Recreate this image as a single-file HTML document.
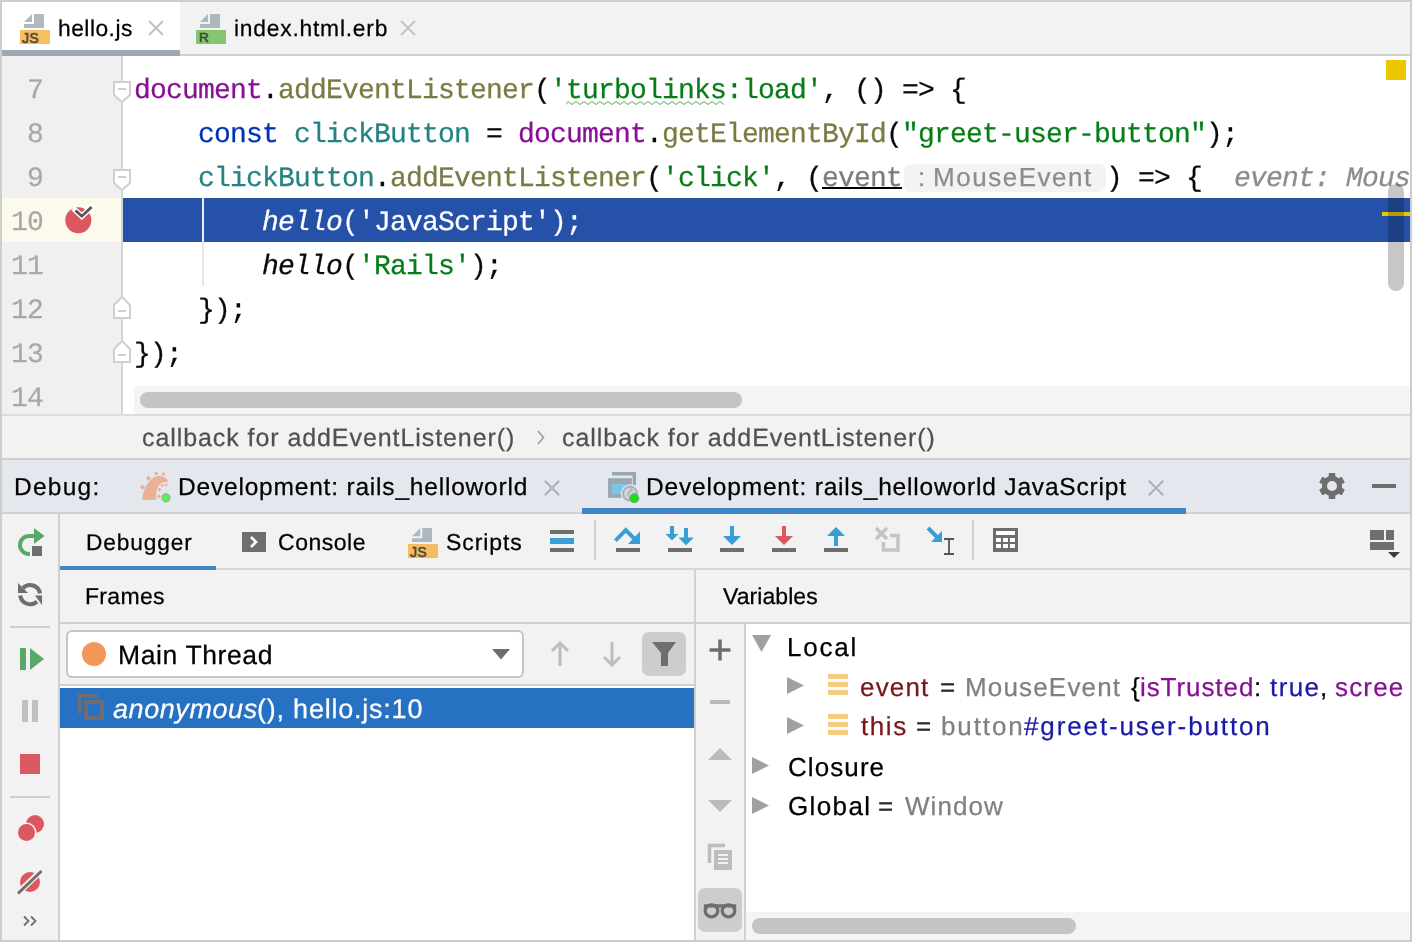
<!DOCTYPE html>
<html><head><meta charset="utf-8"><style>
html,body{margin:0;padding:0;}
body{width:1412px;height:942px;position:relative;overflow:hidden;background:#cdcdcd;font-family:"Liberation Sans", sans-serif;}
.r{position:absolute;display:block;}
.t{position:absolute;white-space:pre;line-height:normal;will-change:transform;text-rendering:geometricPrecision;-webkit-text-stroke:0.25px currentColor;}
</style></head><body>
<div class="r" style="left:2px;top:2px;width:1408px;height:52px;background:#f2f2f2;"></div>
<div class="r" style="left:2px;top:2px;width:178px;height:48px;background:#ffffff;"></div>
<div class="r" style="left:180px;top:54px;width:1230px;height:2px;background:#d1d1d1;"></div>
<div class="r" style="left:2px;top:50px;width:178px;height:6px;background:#9ca7b8;"></div>
<svg class="r" style="left:20px;top:14px" width="30" height="30" viewBox="0 0 30 30"><path d="M14 0H24V14H4V10H14Z" fill="#9aa7b0" opacity=".8"/><path d="M4 8L12 0V8Z" fill="#9aa7b0" opacity=".8"/><rect x="0" y="16" width="30" height="14" fill="#f4af3d" opacity=".8"/><text x="2" y="28.6" font-family="Liberation Sans" font-size="14" stroke="#231f20" stroke-width=".6" fill="#231f20" opacity=".75" letter-spacing=".2">JS</text></svg>
<div class="t" style="left:58.42px;top:15.37px;font-size:22.8px;letter-spacing:0.490px;color:#000;font-family:'Liberation Sans', sans-serif;font-style:normal;">hello.js</div>
<svg class="r" style="left:147px;top:19px" width="18" height="18" viewBox="0 0 18 18"><path d="M2 2L16 16M16 2L2 16" stroke="#bec3c6" stroke-width="2"/></svg>
<svg class="r" style="left:196px;top:14px" width="30" height="30" viewBox="0 0 30 30"><path d="M14 0H24V14H4V10H14Z" fill="#9aa7b0" opacity=".8"/><path d="M4 8L12 0V8Z" fill="#9aa7b0" opacity=".8"/><rect x="0" y="16" width="30" height="14" fill="#62b543" opacity=".75"/><text x="3" y="28" font-family="Liberation Sans" font-size="13.5" stroke="#231f20" stroke-width=".6" fill="#231f20" opacity=".75">R</text></svg>
<div class="t" style="left:233.97px;top:15.37px;font-size:22.8px;letter-spacing:0.783px;color:#000;font-family:'Liberation Sans', sans-serif;font-style:normal;">index.html.erb</div>
<svg class="r" style="left:399px;top:19px" width="18" height="18" viewBox="0 0 18 18"><path d="M2 2L16 16M16 2L2 16" stroke="#bec3c6" stroke-width="2"/></svg>
<div class="r" style="left:2px;top:56px;width:119px;height:358px;background:#f0f0f0;"></div>
<div class="r" style="left:121px;top:56px;width:2px;height:358px;background:#d5d5d5;"></div>
<div class="r" style="left:123px;top:56px;width:1287px;height:358px;background:#ffffff;"></div>
<div class="r" style="left:2px;top:198px;width:119px;height:44px;background:#fcfaed;"></div>
<div class="r" style="left:123px;top:198px;width:1287px;height:44px;background:#2551a8;"></div>
<div class="r" style="left:202px;top:242px;width:2px;height:44px;background:#e6e6e6;"></div>
<div class="r" style="left:202px;top:198px;width:2px;height:44px;background:#ffffff;opacity:.9"></div>
<div class="t" style="left:134px;top:76.19px;font-size:28px;letter-spacing:-0.8px;color:#871094;font-family:'Liberation Mono', monospace;font-style:normal;">document</div>
<div class="t" style="left:262px;top:76.19px;font-size:28px;letter-spacing:-0.8px;color:#080808;font-family:'Liberation Mono', monospace;font-style:normal;">.</div>
<div class="t" style="left:278px;top:76.19px;font-size:28px;letter-spacing:-0.8px;color:#7a7a43;font-family:'Liberation Mono', monospace;font-style:normal;">addEventListener</div>
<div class="t" style="left:534px;top:76.19px;font-size:28px;letter-spacing:-0.8px;color:#080808;font-family:'Liberation Mono', monospace;font-style:normal;">(</div>
<div class="t" style="left:550px;top:76.19px;font-size:28px;letter-spacing:-0.8px;color:#067d17;font-family:'Liberation Mono', monospace;font-style:normal;">'turbolinks:load'</div>
<div class="t" style="left:822px;top:76.19px;font-size:28px;letter-spacing:-0.8px;color:#080808;font-family:'Liberation Mono', monospace;font-style:normal;">, () =&gt; {</div>
<div class="t" style="left:198px;top:120.19px;font-size:28px;letter-spacing:-0.8px;color:#0033b3;font-family:'Liberation Mono', monospace;font-style:normal;">const</div>
<div class="t" style="left:278px;top:120.19px;font-size:28px;letter-spacing:-0.8px;color:#080808;font-family:'Liberation Mono', monospace;font-style:normal;"> </div>
<div class="t" style="left:294px;top:120.19px;font-size:28px;letter-spacing:-0.8px;color:#248282;font-family:'Liberation Mono', monospace;font-style:normal;">clickButton</div>
<div class="t" style="left:470px;top:120.19px;font-size:28px;letter-spacing:-0.8px;color:#080808;font-family:'Liberation Mono', monospace;font-style:normal;"> = </div>
<div class="t" style="left:518px;top:120.19px;font-size:28px;letter-spacing:-0.8px;color:#871094;font-family:'Liberation Mono', monospace;font-style:normal;">document</div>
<div class="t" style="left:646px;top:120.19px;font-size:28px;letter-spacing:-0.8px;color:#080808;font-family:'Liberation Mono', monospace;font-style:normal;">.</div>
<div class="t" style="left:662px;top:120.19px;font-size:28px;letter-spacing:-0.8px;color:#7a7a43;font-family:'Liberation Mono', monospace;font-style:normal;">getElementById</div>
<div class="t" style="left:886px;top:120.19px;font-size:28px;letter-spacing:-0.8px;color:#080808;font-family:'Liberation Mono', monospace;font-style:normal;">(</div>
<div class="t" style="left:902px;top:120.19px;font-size:28px;letter-spacing:-0.8px;color:#067d17;font-family:'Liberation Mono', monospace;font-style:normal;">"greet-user-button"</div>
<div class="t" style="left:1206px;top:120.19px;font-size:28px;letter-spacing:-0.8px;color:#080808;font-family:'Liberation Mono', monospace;font-style:normal;">);</div>
<div class="t" style="left:198px;top:164.19px;font-size:28px;letter-spacing:-0.8px;color:#248282;font-family:'Liberation Mono', monospace;font-style:normal;">clickButton</div>
<div class="t" style="left:374px;top:164.19px;font-size:28px;letter-spacing:-0.8px;color:#080808;font-family:'Liberation Mono', monospace;font-style:normal;">.</div>
<div class="t" style="left:390px;top:164.19px;font-size:28px;letter-spacing:-0.8px;color:#7a7a43;font-family:'Liberation Mono', monospace;font-style:normal;">addEventListener</div>
<div class="t" style="left:646px;top:164.19px;font-size:28px;letter-spacing:-0.8px;color:#080808;font-family:'Liberation Mono', monospace;font-style:normal;">(</div>
<div class="t" style="left:662px;top:164.19px;font-size:28px;letter-spacing:-0.8px;color:#067d17;font-family:'Liberation Mono', monospace;font-style:normal;">'click'</div>
<div class="t" style="left:774px;top:164.19px;font-size:28px;letter-spacing:-0.8px;color:#080808;font-family:'Liberation Mono', monospace;font-style:normal;">, (</div>
<div class="t" style="left:822px;top:164.19px;font-size:28px;letter-spacing:-0.8px;color:#7b7b7b;font-family:'Liberation Mono', monospace;font-style:normal;">event</div>
<div class="r" style="left:822px;top:187px;width:80px;height:2px;background:#000;"></div>
<svg class="r" style="left:566px;top:100px" width="160" height="6" viewBox="0 0 160 6"><path d="M0 4.5 L2 1.5 L6 4.5 L10 1.5 L14 4.5 L18 1.5 L22 4.5 L26 1.5 L30 4.5 L34 1.5 L38 4.5 L42 1.5 L46 4.5 L50 1.5 L54 4.5 L58 1.5 L62 4.5 L66 1.5 L70 4.5 L74 1.5 L78 4.5 L82 1.5 L86 4.5 L90 1.5 L94 4.5 L98 1.5 L102 4.5 L106 1.5 L110 4.5 L114 1.5 L118 4.5 L122 1.5 L126 4.5 L130 1.5 L134 4.5 L138 1.5 L142 4.5 L146 1.5 L150 4.5 L154 1.5 L158 4.5" stroke="#8fc68f" stroke-width="1.2" fill="none"/></svg>
<div class="r" style="left:904px;top:164px;width:202px;height:28px;background:#f3f3f3;border-radius:7px"></div>
<div class="t" style="left:918.23px;top:161.87px;font-size:26px;letter-spacing:0.000px;color:#8c8c8c;font-family:'Liberation Sans', sans-serif;font-style:normal;">:</div>
<div class="t" style="left:932.87px;top:161.87px;font-size:26px;letter-spacing:1.533px;color:#8c8c8c;font-family:'Liberation Sans', sans-serif;font-style:normal;">MouseEvent</div>
<div class="t" style="left:134px;top:164.19px;font-size:28px;letter-spacing:-0.8px;color:#080808;font-family:'Liberation Mono', monospace;font-style:normal;"></div>
<div class="t" style="left:1106px;top:164.19px;font-size:28px;letter-spacing:-0.8px;color:#080808;font-family:'Liberation Mono', monospace">) =&gt; {</div>
<div class="t" style="left:1234px;top:164.19px;font-size:28px;letter-spacing:-0.8px;color:#8c8c8c;font-family:'Liberation Mono', monospace;font-style:italic">event: Mous</div>
<div class="t" style="left:262px;top:208.19px;font-size:28px;letter-spacing:-0.8px;color:#ffffff;font-family:'Liberation Mono', monospace;font-style:italic;">hello</div>
<div class="t" style="left:342px;top:208.19px;font-size:28px;letter-spacing:-0.8px;color:#ffffff;font-family:'Liberation Mono', monospace;font-style:normal;">('JavaScript');</div>
<div class="t" style="left:262px;top:252.19px;font-size:28px;letter-spacing:-0.8px;color:#080808;font-family:'Liberation Mono', monospace;font-style:italic;">hello</div>
<div class="t" style="left:342px;top:252.19px;font-size:28px;letter-spacing:-0.8px;color:#080808;font-family:'Liberation Mono', monospace;font-style:normal;">(</div>
<div class="t" style="left:358px;top:252.19px;font-size:28px;letter-spacing:-0.8px;color:#067d17;font-family:'Liberation Mono', monospace;font-style:normal;">'Rails'</div>
<div class="t" style="left:470px;top:252.19px;font-size:28px;letter-spacing:-0.8px;color:#080808;font-family:'Liberation Mono', monospace;font-style:normal;">);</div>
<div class="t" style="left:198px;top:296.19px;font-size:28px;letter-spacing:-0.8px;color:#080808;font-family:'Liberation Mono', monospace;font-style:normal;">});</div>
<div class="t" style="left:134px;top:340.19px;font-size:28px;letter-spacing:-0.8px;color:#080808;font-family:'Liberation Mono', monospace;font-style:normal;">});</div>
<div class="t" style="left:27px;top:76.19px;font-size:28px;letter-spacing:-0.8px;color:#a8a8a8;font-family:'Liberation Mono', monospace">7</div>
<div class="t" style="left:27px;top:120.19px;font-size:28px;letter-spacing:-0.8px;color:#a8a8a8;font-family:'Liberation Mono', monospace">8</div>
<div class="t" style="left:27px;top:164.19px;font-size:28px;letter-spacing:-0.8px;color:#a8a8a8;font-family:'Liberation Mono', monospace">9</div>
<div class="t" style="left:11px;top:208.19px;font-size:28px;letter-spacing:-0.8px;color:#a8a8a8;font-family:'Liberation Mono', monospace">10</div>
<div class="t" style="left:11px;top:252.19px;font-size:28px;letter-spacing:-0.8px;color:#a8a8a8;font-family:'Liberation Mono', monospace">11</div>
<div class="t" style="left:11px;top:296.19px;font-size:28px;letter-spacing:-0.8px;color:#a8a8a8;font-family:'Liberation Mono', monospace">12</div>
<div class="t" style="left:11px;top:340.19px;font-size:28px;letter-spacing:-0.8px;color:#a8a8a8;font-family:'Liberation Mono', monospace">13</div>
<div class="t" style="left:11px;top:384.19px;font-size:28px;letter-spacing:-0.8px;color:#a8a8a8;font-family:'Liberation Mono', monospace">14</div>
<svg class="r" style="left:113px;top:81px" width="18" height="22" viewBox="0 0 18 22"><path d="M1 1H17V14L9 21L1 14Z" fill="#ffffff" stroke="#cfcfcf" stroke-width="2"/><path d="M5 8H13" stroke="#cfcfcf" stroke-width="2"/></svg>
<svg class="r" style="left:113px;top:169px" width="18" height="22" viewBox="0 0 18 22"><path d="M1 1H17V14L9 21L1 14Z" fill="#ffffff" stroke="#cfcfcf" stroke-width="2"/><path d="M5 8H13" stroke="#cfcfcf" stroke-width="2"/></svg>
<svg class="r" style="left:113px;top:295.6px" width="18" height="24" viewBox="0 0 18 24"><path d="M1 22H17V9L9 1L1 9Z" fill="#ffffff" stroke="#cfcfcf" stroke-width="2"/><path d="M5 15H13" stroke="#cfcfcf" stroke-width="2"/></svg>
<svg class="r" style="left:113px;top:339.9px" width="18" height="24" viewBox="0 0 18 24"><path d="M1 22H17V9L9 1L1 9Z" fill="#ffffff" stroke="#cfcfcf" stroke-width="2"/><path d="M5 15H13" stroke="#cfcfcf" stroke-width="2"/></svg>
<svg class="r" style="left:62px;top:202px" width="36" height="34" viewBox="0 0 36 34"><circle cx="16.3" cy="18.2" r="13" fill="#db5860"/><path d="M13.2 8.2L19.8 14.3L30 4.6" stroke="#ffffff" stroke-width="5.5" fill="none" stroke-linecap="square"/><path d="M13.6 8.4L19.8 14.2L29.6 4.9" stroke="#555555" stroke-width="2.8" fill="none"/></svg>
<div class="r" style="left:1386px;top:60px;width:20px;height:20px;background:#ebc700;"></div>
<div class="r" style="left:1382px;top:212px;width:28px;height:4px;background:#ebc700;"></div>
<div class="r" style="left:1388px;top:184px;width:16px;height:107px;background:rgba(0,0,0,0.22);border-radius:8px"></div>
<div class="r" style="left:134px;top:386px;width:1276px;height:28px;background:#f4f4f4;"></div>
<div class="r" style="left:140px;top:392px;width:602px;height:16px;background:#c4c4c4;border-radius:8px"></div>
<div class="r" style="left:2px;top:414px;width:1408px;height:2px;background:#dcdcdc;"></div>
<div class="r" style="left:2px;top:416px;width:1408px;height:42px;background:#f2f2f2;"></div>
<div class="r" style="left:2px;top:458px;width:1408px;height:2px;background:#cfcfcf;"></div>
<div class="t" style="left:141.64px;top:424.38px;font-size:25px;letter-spacing:0.923px;color:#505050;font-family:'Liberation Sans', sans-serif;font-style:normal;">callback for addEventListener()</div>
<svg class="r" style="left:537px;top:430px" width="8" height="15" viewBox="0 0 8 15"><path d="M1 1L6.5 7.5L1 14" stroke="#a0a0a0" stroke-width="1.8" fill="none"/></svg>
<div class="t" style="left:561.64px;top:424.38px;font-size:25px;letter-spacing:0.943px;color:#505050;font-family:'Liberation Sans', sans-serif;font-style:normal;">callback for addEventListener()</div>
<div class="r" style="left:2px;top:460px;width:1408px;height:52px;background:#e4e7ee;"></div>
<div class="r" style="left:2px;top:512px;width:1408px;height:2px;background:#d0d0d0;"></div>
<div class="t" style="left:13.99px;top:473.63px;font-size:24.5px;letter-spacing:1.249px;color:#000;font-family:'Liberation Sans', sans-serif;font-style:normal;">Debug:</div>
<svg class="r" style="left:138px;top:470px" width="34" height="34" viewBox="0 0 34 34"><g fill="#e9b196"><path d="M4.3 30C5 18 12 6 21.5 6C25 6 28 8 30 10.6L29.1 12.6C27.5 12 26.5 12.3 25.7 12.3C21 13 18 18 17.9 30Z"/><rect x="2.70" y="15.40" width="3.6" height="3.6" transform="rotate(45 4.5 17.2)"/><rect x="8.60" y="6.50" width="3.6" height="3.6" transform="rotate(45 10.4 8.3)"/><rect x="16.70" y="1.80" width="3.2" height="3.2" transform="rotate(45 18.3 3.4)"/><rect x="24.00" y="2.40" width="3" height="3" transform="rotate(45 25.5 3.9)"/><rect x="27.00" y="13.70" width="2.4" height="2.4" transform="rotate(45 28.2 14.9)"/><rect x="22.90" y="14.20" width="2.6" height="2.6" transform="rotate(45 24.2 15.5)"/><rect x="20.10" y="18.40" width="2.8" height="2.8" transform="rotate(45 21.5 19.8)"/><rect x="19.30" y="24.90" width="3" height="3" transform="rotate(45 20.8 26.4)"/></g><circle cx="28" cy="27.8" r="4.2" fill="#5ced5c" stroke="#9a9a9a" stroke-width=".8"/></svg>
<div class="t" style="left:178.09px;top:473.63px;font-size:24.5px;letter-spacing:0.806px;color:#000;font-family:'Liberation Sans', sans-serif;font-style:normal;">Development: rails_helloworld</div>
<svg class="r" style="left:544px;top:480px" width="16" height="16" viewBox="0 0 16 16"><path d="M0.8 0.8L15.2 15.2M15.2 0.8L0.8 15.2" stroke="#aab0b6" stroke-width="2"/></svg>
<div class="r" style="left:582px;top:508px;width:604px;height:6px;background:#4083c9;"></div>
<svg class="r" style="left:606px;top:470px" width="34" height="34" viewBox="0 0 34 34"><path d="M6 2H30V15H26.4V5.6H6Z" fill="#9aa7b0"/><rect x="1.5" y="7.4" width="25" height="21" fill="#e4e7ee"/><rect x="2" y="8.2" width="23.8" height="19.6" fill="#9aa7b0"/><rect x="6" y="14" width="16" height="10" fill="#7cc5e6"/><circle cx="24" cy="23.6" r="9.3" fill="#e4e7ee"/><circle cx="24" cy="23.6" r="7" fill="#cfd5da" stroke="#a7b2ba" stroke-width="2"/><path d="M20 18L24 17L26 20L23 22L22 26" stroke="#a7b2ba" stroke-width="1.5" fill="none"/><circle cx="28.3" cy="28.2" r="4.6" fill="#16e016" stroke="#8f8f8f" stroke-width=".8"/></svg>
<div class="t" style="left:645.99px;top:473.63px;font-size:24.5px;letter-spacing:0.823px;color:#000;font-family:'Liberation Sans', sans-serif;font-style:normal;">Development: rails_helloworld JavaScript</div>
<svg class="r" style="left:1148px;top:480px" width="16" height="16" viewBox="0 0 16 16"><path d="M0.8 0.8L15.2 15.2M15.2 0.8L0.8 15.2" stroke="#aab0b6" stroke-width="2"/></svg>
<svg class="r" style="left:1319px;top:473px" width="26" height="26" viewBox="0 0 26 26"><g transform="translate(13 13)" fill="#6e6e6e"><circle r="10.2"/><rect x="-3.3" y="-13" width="6.6" height="5" rx="0.8" transform="rotate(0)"/><rect x="-3.3" y="-13" width="6.6" height="5" rx="0.8" transform="rotate(60)"/><rect x="-3.3" y="-13" width="6.6" height="5" rx="0.8" transform="rotate(120)"/><rect x="-3.3" y="-13" width="6.6" height="5" rx="0.8" transform="rotate(180)"/><rect x="-3.3" y="-13" width="6.6" height="5" rx="0.8" transform="rotate(240)"/><rect x="-3.3" y="-13" width="6.6" height="5" rx="0.8" transform="rotate(300)"/><circle r="5" fill="#e4e7ee"/></g></svg>
<div class="r" style="left:1372px;top:484px;width:24px;height:4px;background:#6e6e6e;"></div>
<div class="r" style="left:2px;top:514px;width:56px;height:426px;background:#f2f2f2;"></div>
<div class="r" style="left:58px;top:514px;width:2px;height:426px;background:#d0d0d0;"></div>
<svg class="r" style="left:16px;top:526px" width="30" height="32" viewBox="0 0 30 32"><path d="M18.5 10H13A9 9 0 0 0 13 28H14" stroke="#59a869" stroke-width="4" fill="none"/><path d="M18 2L28.6 10L18 18Z" fill="#59a869"/><rect x="16" y="20" width="10" height="10" fill="#6e6e6e"/></svg>
<svg class="r" style="left:16px;top:580px" width="28" height="28" viewBox="0 0 28 28"><g fill="none" stroke="#6e6e6e" stroke-width="4"><path d="M7 8A10 10 0 0 1 24 13.5"/><path d="M4.2 15.5A10 10 0 0 0 21 21.5"/></g><path d="M2 3V13H12Z" fill="#6e6e6e"/><path d="M19 15.5H26V25Z" fill="#6e6e6e"/></svg>
<div class="r" style="left:10px;top:626px;width:40px;height:2px;background:#cdcdcd;"></div>
<svg class="r" style="left:20px;top:648px" width="24" height="22" viewBox="0 0 24 22"><rect x="0" y="0" width="6" height="22" fill="#59a869"/><path d="M10 0L24 11L10 22Z" fill="#59a869"/></svg>
<svg class="r" style="left:22px;top:700px" width="16" height="22" viewBox="0 0 16 22"><rect x="0" y="0" width="6" height="22" fill="#c0c0c0"/><rect x="10" y="0" width="6" height="22" fill="#c0c0c0"/></svg>
<div class="r" style="left:20px;top:754px;width:20px;height:20px;background:#db5860;"></div>
<div class="r" style="left:10px;top:796px;width:40px;height:2px;background:#cdcdcd;"></div>
<svg class="r" style="left:17px;top:815px" width="28" height="28" viewBox="0 0 28 28"><circle cx="18" cy="9" r="9" fill="#db5860"/><circle cx="9.5" cy="17.5" r="10" fill="#f2f2f2"/><circle cx="9.5" cy="17.5" r="8.5" fill="#db5860"/></svg>
<svg class="r" style="left:16px;top:868px" width="28" height="28" viewBox="0 0 28 28"><circle cx="14" cy="14" r="10" fill="#db5860"/><path d="M2 25L25.5 2.5" stroke="#f2f2f2" stroke-width="6"/><path d="M2 25.5L25.5 3" stroke="#6e6e6e" stroke-width="3"/></svg>
<svg class="r" style="left:23px;top:915px" width="16" height="12" viewBox="0 0 16 12"><path d="M1 1.5L5.5 6L1 10.5M8 1.5L12.5 6L8 10.5" stroke="#6e6e6e" stroke-width="1.8" fill="none"/></svg>
<div class="r" style="left:60px;top:514px;width:1350px;height:54px;background:#f2f2f2;"></div>
<div class="r" style="left:60px;top:568px;width:1350px;height:2px;background:#d5d5d5;"></div>
<div class="r" style="left:60px;top:566px;width:156px;height:4px;background:#4083c9;"></div>
<div class="t" style="left:85.64px;top:529.46px;font-size:22.7px;letter-spacing:0.863px;color:#000;font-family:'Liberation Sans', sans-serif;font-style:normal;">Debugger</div>
<svg class="r" style="left:242px;top:532px" width="24" height="20" viewBox="0 0 24 20"><rect width="24" height="20" fill="#6e6e6e"/><path d="M9 5L14 10L9 15" stroke="#fff" stroke-width="2.6" fill="none"/></svg>
<div class="t" style="left:277.53px;top:529.18px;font-size:23px;letter-spacing:0.517px;color:#000;font-family:'Liberation Sans', sans-serif;font-style:normal;">Console</div>
<svg class="r" style="left:408px;top:528px" width="30" height="30" viewBox="0 0 30 30"><path d="M14.3 0H24V14H4V10.3H14.3Z" fill="#9aa7b0" opacity=".8"/><path d="M4 8.3L12.2 0.3V8.3Z" fill="#9aa7b0" opacity=".8"/><rect x="0" y="16" width="30" height="14" fill="#f4af3d" opacity=".8"/><text x="2" y="28.6" font-family="Liberation Sans" font-size="14" stroke="#231f20" stroke-width=".6" fill="#231f20" opacity=".75" letter-spacing=".2">JS</text></svg>
<div class="t" style="left:445.96px;top:529.18px;font-size:23px;letter-spacing:0.897px;color:#000;font-family:'Liberation Sans', sans-serif;font-style:normal;">Scripts</div>
<svg class="r" style="left:550px;top:530px" width="24" height="22" viewBox="0 0 24 22"><rect y="0" width="24" height="4" fill="#6e6e6e"/><rect y="8" width="24" height="6" fill="#389fd6"/><rect y="18" width="24" height="4" fill="#6e6e6e"/></svg>
<div class="r" style="left:594px;top:520px;width:2px;height:40px;background:#cdcdcd;"></div>
<svg class="r" style="left:614px;top:524px" width="28" height="30" viewBox="0 0 28 30"><path d="M1.4 16.6L11.8 6.2L21 15.4" stroke="#389fd6" stroke-width="4" fill="none"/><path d="M26 7.5V20H14Z" fill="#389fd6"/><rect x="2" y="24" width="24" height="4" fill="#6e6e6e"/></svg>
<svg class="r" style="left:666px;top:524px" width="28" height="30" viewBox="0 0 28 30"><rect x="4" y="2" width="4" height="9" fill="#389fd6"/><path d="M-0.5 10H12.5L6 16.5Z" fill="#389fd6"/><rect x="18" y="4" width="4" height="10" fill="#389fd6"/><path d="M12.5 13.5H27.7L20 21.5Z" fill="#389fd6"/><rect x="2" y="24" width="24" height="4" fill="#6e6e6e"/></svg>
<svg class="r" style="left:718px;top:524px" width="28" height="30" viewBox="0 0 28 30"><rect x="12" y="2" width="4" height="11" fill="#389fd6"/><path d="M5 12H23L14 21Z" fill="#389fd6"/><rect x="2" y="24" width="24" height="4" fill="#6e6e6e"/></svg>
<svg class="r" style="left:770px;top:524px" width="28" height="30" viewBox="0 0 28 30"><rect x="12" y="2" width="4" height="11" fill="#db5860"/><path d="M5 12H23L14 21Z" fill="#db5860"/><rect x="2" y="24" width="24" height="4" fill="#6e6e6e"/></svg>
<svg class="r" style="left:822px;top:524px" width="28" height="30" viewBox="0 0 28 30"><path d="M5 12H23L14 3Z" fill="#389fd6"/><rect x="12" y="11" width="4" height="11" fill="#389fd6"/><rect x="2" y="24" width="24" height="4" fill="#6e6e6e"/></svg>
<svg class="r" style="left:874px;top:526px" width="28" height="28" viewBox="0 0 28 28"><path d="M2 2L13 13M13 2L2 13" stroke="#c4c4c4" stroke-width="3.5"/><path d="M16 9.5H24V24H9.5V16" stroke="#c4c4c4" stroke-width="3.5" fill="none"/></svg>
<svg class="r" style="left:926px;top:526px" width="30" height="30" viewBox="0 0 30 30"><path d="M2 2L11 11" stroke="#389fd6" stroke-width="4"/><path d="M16 5V16H5Z" fill="#389fd6"/><path d="M18 13H28M23 13V28M18 28H28" stroke="#555" stroke-width="1.8"/></svg>
<div class="r" style="left:972px;top:520px;width:2px;height:40px;background:#cdcdcd;"></div>
<svg class="r" style="left:993px;top:528px" width="26" height="26" viewBox="0 0 26 26"><rect x="0" y="0" width="25" height="24" fill="#6e6e6e"/><rect x="3" y="3" width="19" height="4" fill="#fff"/><rect x="3" y="10" width="5" height="4" fill="#fff"/><rect x="3" y="16" width="5" height="4" fill="#fff"/><rect x="10" y="10" width="5" height="4" fill="#fff"/><rect x="10" y="16" width="5" height="4" fill="#fff"/><rect x="17" y="10" width="5" height="4" fill="#fff"/><rect x="17" y="16" width="5" height="4" fill="#fff"/></svg>
<svg class="r" style="left:1368px;top:528px" width="34" height="32" viewBox="0 0 34 32"><rect x="2" y="2" width="14" height="10" fill="#6e6e6e"/><rect x="18" y="2" width="8" height="10" fill="#6e6e6e"/><rect x="2" y="14" width="24" height="8" fill="#6e6e6e"/><path d="M20 24H32L26 30Z" fill="#3c3c3c"/></svg>
<div class="r" style="left:60px;top:570px;width:634px;height:52px;background:#f2f2f2;"></div>
<div class="r" style="left:60px;top:622px;width:634px;height:2px;background:#d0d0d0;"></div>
<div class="t" style="left:85.01px;top:583.18px;font-size:23px;letter-spacing:0.313px;color:#000;font-family:'Liberation Sans', sans-serif;font-style:normal;">Frames</div>
<div class="r" style="left:60px;top:624px;width:634px;height:60px;background:#f2f2f2;"></div>
<div class="r" style="left:60px;top:684px;width:634px;height:2px;background:#d0d0d0;"></div>
<div class="r" style="left:60px;top:686px;width:634px;height:254px;background:#ffffff;"></div>
<div class="r" style="left:66px;top:630px;width:458px;height:48px;background:#ffffff;border:2px solid #c4c4c4;border-radius:6px;box-sizing:border-box"></div>
<svg class="r" style="left:82px;top:642px" width="24" height="24" viewBox="0 0 24 24"><circle cx="12" cy="12" r="12" fill="#f59659"/></svg>
<div class="t" style="left:117.83px;top:639.82px;font-size:26.5px;letter-spacing:0.612px;color:#000;font-family:'Liberation Sans', sans-serif;font-style:normal;">Main Thread</div>
<svg class="r" style="left:492px;top:649px" width="18" height="11" viewBox="0 0 18 11"><path d="M0 0H18L9 10.5Z" fill="#6e6e6e"/></svg>
<svg class="r" style="left:550px;top:641px" width="20" height="26" viewBox="0 0 20 26"><path d="M2 10L10 2L18 10M10 3V25" stroke="#bdbdbd" stroke-width="3" fill="none"/></svg>
<svg class="r" style="left:602px;top:641px" width="20" height="26" viewBox="0 0 20 26"><path d="M2 16L10 24L18 16M10 23V1" stroke="#bdbdbd" stroke-width="3" fill="none"/></svg>
<div class="r" style="left:642px;top:632px;width:44px;height:44px;background:#cdcdcd;border-radius:7px"></div>
<svg class="r" style="left:651px;top:641px" width="26" height="26" viewBox="0 0 26 26"><path d="M1 1H25L17 12V25H10V12Z" fill="#6e6e6e"/></svg>
<div class="r" style="left:60px;top:688px;width:634px;height:40px;background:#2771c2;"></div>
<svg class="r" style="left:77px;top:693px" width="28" height="28" viewBox="0 0 28 28"><path d="M2.75 20.8V2.95H21" stroke="#6e6e6e" stroke-width="3.9" fill="none"/><rect x="9.15" y="8.95" width="15.9" height="16" stroke="#6e6e6e" stroke-width="3.9" fill="none"/></svg>
<div class="t" style="left:112.59px;top:693.77px;font-size:27px;letter-spacing:0.572px;color:#fff;font-family:'Liberation Sans', sans-serif;font-style:italic;">anonymous</div>
<div class="t" style="left:256.83px;top:693.77px;font-size:27px;letter-spacing:0.776px;color:#fff;font-family:'Liberation Sans', sans-serif;font-style:normal;">(), hello.js:10</div>
<div class="r" style="left:694px;top:570px;width:2px;height:370px;background:#d0d0d0;"></div>
<div class="r" style="left:696px;top:570px;width:714px;height:52px;background:#f2f2f2;"></div>
<div class="r" style="left:696px;top:622px;width:714px;height:2px;background:#d0d0d0;"></div>
<div class="t" style="left:723.30px;top:583.18px;font-size:23px;letter-spacing:0.068px;color:#000;font-family:'Liberation Sans', sans-serif;font-style:normal;">Variables</div>
<div class="r" style="left:696px;top:624px;width:48px;height:316px;background:#f2f2f2;"></div>
<div class="r" style="left:744px;top:624px;width:2px;height:316px;background:#d0d0d0;"></div>
<div class="r" style="left:746px;top:624px;width:664px;height:316px;background:#ffffff;"></div>
<svg class="r" style="left:708px;top:638px" width="24" height="24" viewBox="0 0 24 24"><path d="M12 1.5V22.5M1.5 12H22.5" stroke="#6e6e6e" stroke-width="3.5"/></svg>
<div class="r" style="left:710px;top:700px;width:20px;height:4px;background:#bababa;"></div>
<svg class="r" style="left:708px;top:748px" width="24" height="12" viewBox="0 0 24 12"><path d="M0 12H24L12 0Z" fill="#bababa"/></svg>
<svg class="r" style="left:708px;top:800px" width="24" height="12" viewBox="0 0 24 12"><path d="M0 0H24L12 12Z" fill="#bababa"/></svg>
<svg class="r" style="left:706px;top:842px" width="28" height="30" viewBox="0 0 28 30"><path d="M3.5 21V3.5H19" stroke="#bdbdbd" stroke-width="3.5" fill="none"/><rect x="8" y="8" width="18" height="20" fill="#bdbdbd"/><rect x="12" y="12" width="10" height="2" fill="#f2f2f2"/><rect x="12" y="16" width="10" height="2" fill="#f2f2f2"/><rect x="12" y="20" width="10" height="2" fill="#f2f2f2"/></svg>
<div class="r" style="left:698px;top:888px;width:44px;height:44px;background:#cdcdcd;border-radius:7px"></div>
<svg class="r" style="left:703px;top:901px" width="34" height="19" viewBox="0 0 34 19"><g fill="none" stroke="#6e6e6e" stroke-width="3.3"><ellipse cx="8.5" cy="9.8" rx="6.3" ry="6"/><ellipse cx="25.5" cy="9.8" rx="6.3" ry="6"/></g><path d="M0.8 3.2H33.2V6.5H0.8Z" fill="#6e6e6e"/></svg>
<svg class="r" style="left:752px;top:635px" width="19" height="17" viewBox="0 0 19 17"><path d="M0 0H19L9.5 17Z" fill="#a0a0a0"/></svg>
<div class="t" style="left:786.87px;top:632.07px;font-size:26px;letter-spacing:1.754px;color:#000;font-family:'Liberation Sans', sans-serif;font-style:normal;">Local</div>
<svg class="r" style="left:787px;top:677px" width="17" height="17" viewBox="0 0 17 17"><path d="M0 0V17L17 8.5Z" fill="#a0a0a0"/></svg>
<svg class="r" style="left:828px;top:674px" width="20" height="22" viewBox="0 0 20 22"><rect y="0" width="20" height="5" fill="#f4c060" opacity=".8"/><rect y="8" width="20" height="5" fill="#f4c060" opacity=".8"/><rect y="16" width="20" height="5" fill="#f4c060" opacity=".8"/></svg>
<div class="t" style="left:860.30px;top:671.67px;font-size:26px;letter-spacing:1.173px;color:#7a1616;font-family:'Liberation Sans', sans-serif;font-style:normal;">event</div>
<div class="t" style="left:939.73px;top:671.67px;font-size:26px;letter-spacing:0.000px;color:#2a2a2a;font-family:'Liberation Sans', sans-serif;font-style:normal;">=</div>
<div class="t" style="left:964.87px;top:671.67px;font-size:26px;letter-spacing:1.167px;color:#808080;font-family:'Liberation Sans', sans-serif;font-style:normal;">MouseEvent</div>
<div class="t" style="left:1130.87px;top:671.67px;font-size:26px;letter-spacing:0.000px;color:#000;font-family:'Liberation Sans', sans-serif;font-style:normal;">{</div>
<div class="t" style="left:1139.76px;top:671.67px;font-size:26px;letter-spacing:0.924px;color:#871094;font-family:'Liberation Sans', sans-serif;font-style:normal;">isTrusted</div>
<div class="t" style="left:1253.63px;top:671.67px;font-size:26px;letter-spacing:0.000px;color:#000;font-family:'Liberation Sans', sans-serif;font-style:normal;">:</div>
<div class="t" style="left:1269.61px;top:671.67px;font-size:26px;letter-spacing:1.416px;color:#1a1aa6;font-family:'Liberation Sans', sans-serif;font-style:normal;">true</div>
<div class="t" style="left:1319.66px;top:671.67px;font-size:26px;letter-spacing:0.000px;color:#000;font-family:'Liberation Sans', sans-serif;font-style:normal;">,</div>
<div class="t" style="left:1334.88px;top:671.67px;font-size:26px;letter-spacing:1.175px;color:#871094;font-family:'Liberation Sans', sans-serif;font-style:normal;">scree</div>
<svg class="r" style="left:787px;top:717px" width="17" height="17" viewBox="0 0 17 17"><path d="M0 0V17L17 8.5Z" fill="#a0a0a0"/></svg>
<svg class="r" style="left:828px;top:714px" width="20" height="22" viewBox="0 0 20 22"><rect y="0" width="20" height="5" fill="#f4c060" opacity=".8"/><rect y="8" width="20" height="5" fill="#f4c060" opacity=".8"/><rect y="16" width="20" height="5" fill="#f4c060" opacity=".8"/></svg>
<div class="t" style="left:861.01px;top:711.37px;font-size:26px;letter-spacing:1.591px;color:#7a1616;font-family:'Liberation Sans', sans-serif;font-style:normal;">this</div>
<div class="t" style="left:915.73px;top:711.37px;font-size:26px;letter-spacing:0.000px;color:#2a2a2a;font-family:'Liberation Sans', sans-serif;font-style:normal;">=</div>
<div class="t" style="left:940.52px;top:711.37px;font-size:26px;letter-spacing:1.895px;color:#808080;font-family:'Liberation Sans', sans-serif;font-style:normal;">button</div>
<div class="t" style="left:1024.39px;top:711.37px;font-size:26px;letter-spacing:1.876px;color:#1a1aa6;font-family:'Liberation Sans', sans-serif;font-style:normal;">#greet-user-button</div>
<svg class="r" style="left:752px;top:757px" width="17" height="17" viewBox="0 0 17 17"><path d="M0 0V17L17 8.5Z" fill="#a0a0a0"/></svg>
<div class="t" style="left:787.68px;top:751.87px;font-size:26px;letter-spacing:1.081px;color:#000;font-family:'Liberation Sans', sans-serif;font-style:normal;">Closure</div>
<svg class="r" style="left:752px;top:797px" width="17" height="17" viewBox="0 0 17 17"><path d="M0 0V17L17 8.5Z" fill="#a0a0a0"/></svg>
<div class="t" style="left:787.69px;top:791.47px;font-size:26px;letter-spacing:1.378px;color:#000;font-family:'Liberation Sans', sans-serif;font-style:normal;">Global</div>
<div class="t" style="left:878.23px;top:791.47px;font-size:26px;letter-spacing:0.000px;color:#2a2a2a;font-family:'Liberation Sans', sans-serif;font-style:normal;">=</div>
<div class="t" style="left:905.19px;top:791.47px;font-size:26px;letter-spacing:1.056px;color:#808080;font-family:'Liberation Sans', sans-serif;font-style:normal;">Window</div>
<div class="r" style="left:746px;top:912px;width:664px;height:28px;background:#f4f4f4;"></div>
<div class="r" style="left:752px;top:918px;width:324px;height:16px;background:#c4c4c4;border-radius:8px"></div>
</body></html>
